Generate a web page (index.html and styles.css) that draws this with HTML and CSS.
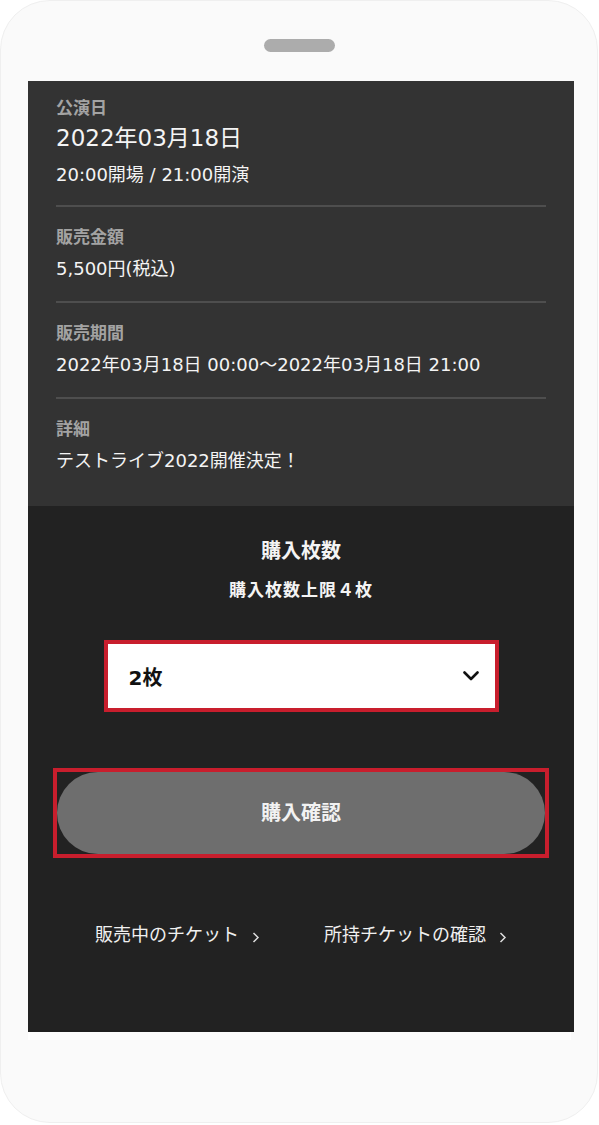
FILE: index.html
```html
<!DOCTYPE html>
<html lang="ja">
<head>
<meta charset="utf-8">
<link rel="stylesheet" href="styles.css">
</head>
<body>
<div class="phone">
  <div class="speaker"></div>
  <div class="screen">
    <section class="info">
      <div class="item item-first">
        <div class="label">公演日</div>
        <div class="date">2022年03月18日</div>
        <div class="value">20:00開場 / 21:00開演</div>
      </div>
      <div class="item">
        <div class="label">販売金額</div>
        <div class="value">5,500円(税込)</div>
      </div>
      <div class="item">
        <div class="label">販売期間</div>
        <div class="value">2022年03月18日 00:00～2022年03月18日 21:00</div>
      </div>
      <div class="item item-last">
        <div class="label">詳細</div>
        <div class="value">テストライブ2022開催決定！</div>
      </div>
    </section>
    <section class="purchase">
      <div class="title">購入枚数</div>
      <div class="limit">購入枚数上限４枚</div>
      <div class="select">
        <span class="select-text">2枚</span>
        <svg class="select-arrow" width="16" height="10" viewBox="0 0 16 10"><path d="M1.5 1.5 L8 8 L14.5 1.5" fill="none" stroke="#111" stroke-width="2.6" stroke-linecap="round" stroke-linejoin="round"/></svg>
      </div>
      <div class="btn-frame">
        <div class="btn">購入確認</div>
      </div>
      <div class="links">
        <a class="link">販売中のチケット<svg class="chev" width="8" height="12" viewBox="0 0 8 12"><path d="M1.5 2 L6 6.5 L1.5 11" fill="none" stroke="#ddd" stroke-width="1.5"/></svg></a>
        <a class="link">所持チケットの確認<svg class="chev" width="8" height="12" viewBox="0 0 8 12"><path d="M1.5 2 L6 6.5 L1.5 11" fill="none" stroke="#ddd" stroke-width="1.5"/></svg></a>
      </div>
    </section>
  </div>
  <div class="strip"></div>
</div>
</body>
</html>
```

FILE: styles.css
```css
html, body {
  margin: 0;
  padding: 0;
  background: #ffffff;
}
body {
  font-family: "DejaVu Sans", "Noto Sans CJK JP", sans-serif;
}
.phone {
  box-sizing: border-box;
  width: 598px;
  height: 1123px;
  background: #fafafa;
  border: 1px solid #efefef;
  border-radius: 50px;
  padding-top: 38px;
  display: flex;
  flex-direction: column;
}
.speaker {
  width: 71px;
  height: 13px;
  border-radius: 7px;
  background: #acacac;
  margin: 0 0 29px 263px;
}
.screen {
  width: 546px;
  margin-left: 27px;
  display: flex;
  flex-direction: column;
}
.info {
  background: #333333;
  padding: 0 28px;
}
.item {
  padding: 18px 0 18px;
  border-bottom: 2px solid #4e4e4e;
  display: flex;
  flex-direction: column;
}
.item-first {
  padding-top: 15px;
  padding-bottom: 16px;
}
.item-last {
  border-bottom: none;
  padding-bottom: 31px;
}
.label {
  font-size: 17px;
  line-height: 24px;
  font-weight: bold;
  color: #a3a3a3;
  margin-bottom: 6px;
}
.item-first .label {
  margin-bottom: 2px;
}
.date {
  font-size: 23px;
  line-height: 32px;
  color: #f4f4f4;
  margin-bottom: 7px;
}
.value {
  font-size: 18px;
  line-height: 28px;
  color: #f4f4f4;
  white-space: nowrap;
}
.purchase {
  background: #222222;
  height: 526px;
  box-sizing: border-box;
  padding-top: 31px;
  display: flex;
  flex-direction: column;
  align-items: center;
}
.title {
  font-size: 20px;
  line-height: 28px;
  font-weight: bold;
  color: #f4f4f4;
}
.limit {
  margin-top: 13px;
  font-size: 17px;
  line-height: 24px;
  font-weight: bold;
  color: #f4f4f4;
  letter-spacing: 1px;
}
.select {
  margin-top: 38px;
  box-sizing: border-box;
  width: 395px;
  height: 72px;
  border: 4px solid #c81e2d;
  background: #ffffff;
  display: flex;
  align-items: center;
  justify-content: space-between;
  padding: 0 16px 0 21px;
}
.select-text {
  font-size: 20px;
  font-weight: bold;
  color: #111;
}
.btn-frame {
  margin-top: 56px;
  box-sizing: border-box;
  width: 496px;
  height: 90px;
  border: 4px solid #c81e2d;
  display: flex;
}
.btn {
  flex: 1;
  background: #6e6e6e;
  border-radius: 41px;
  display: flex;
  align-items: center;
  justify-content: center;
  font-size: 20px;
  font-weight: bold;
  color: #f2f2f2;
  padding-bottom: 4px;
}
.links {
  margin-top: 64px;
  display: flex;
  gap: 64px;
  line-height: 26px;
}
.link {
  font-size: 18px;
  color: #f0f0f0;
  display: flex;
  align-items: center;
  gap: 13px;
}
.chev {
  margin-top: 4px;
}
.strip {
  width: 543px;
  height: 8px;
  margin-left: 27px;
  background: #ffffff;
}
```
